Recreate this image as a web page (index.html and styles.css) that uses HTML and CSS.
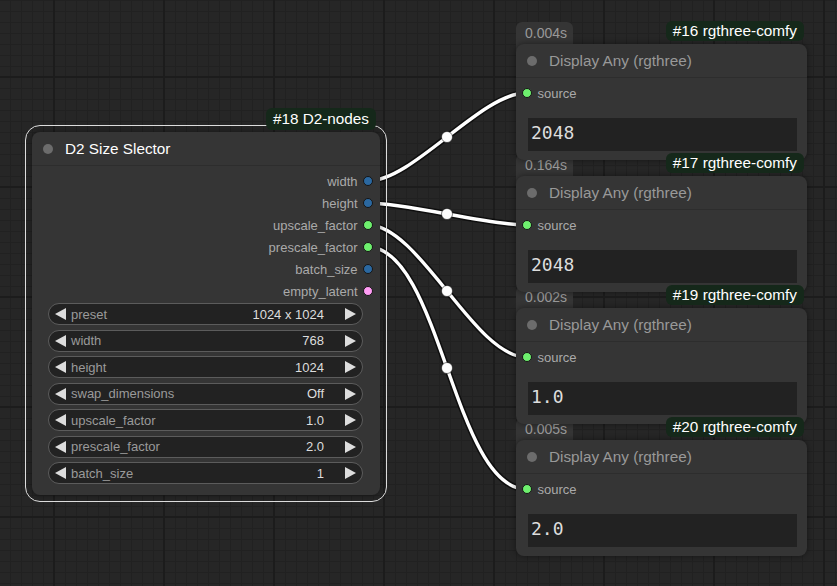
FILE: index.html
```html
<!DOCTYPE html>
<html lang="en">
<head>
    <meta charset="UTF-8">
    <meta name="viewport" content="width=device-width, initial-scale=1.0">
    <title>D2 Size Selector - graph</title>
    <link rel="stylesheet" href="styles.css">
</head>
<body>
    <div class="canvas">
        <svg class="links" width="837" height="586" viewBox="0 0 837 586">
            <g class="link-shadow">
                <path d="M368 181 C413 181, 481 93, 526 93"/>
                <path d="M368 203 C408 203, 486 225, 526 225"/>
                <path d="M368 225 C419.5 225, 474.5 357, 526 357"/>
                <path d="M368 247 C440 247, 454 489, 526 489"/>
            </g>
            <g class="link">
                <path d="M368 181 C413 181, 481 93, 526 93"/>
                <path d="M368 203 C408 203, 486 225, 526 225"/>
                <path d="M368 225 C419.5 225, 474.5 357, 526 357"/>
                <path d="M368 247 C440 247, 454 489, 526 489"/>
            </g>
            <g class="link-mid">
                <circle cx="447" cy="137" r="5.5"/>
                <circle cx="447" cy="214" r="5.5"/>
                <circle cx="447" cy="291" r="5.5"/>
                <circle cx="447" cy="368" r="5.5"/>
            </g>
        </svg>

        <!-- size selector node -->
        <div class="node sizer selected">
            <div class="id-badge">#18 D2-nodes</div>
            <div class="node-title"><span class="title-dot"></span>D2 Size Slector</div>
            <div class="outputs">
                <div class="out">width <span class="slot int"></span></div>
                <div class="out">height <span class="slot int"></span></div>
                <div class="out">upscale_factor <span class="slot float"></span></div>
                <div class="out">prescale_factor <span class="slot float"></span></div>
                <div class="out">batch_size <span class="slot int"></span></div>
                <div class="out">empty_latent <span class="slot latent"></span></div>
            </div>
            <div class="widgets">
                <div class="widget"><span class="arrow left"></span><span class="w-label">preset</span><span class="w-value">1024 x 1024</span><span class="arrow right"></span></div>
                <div class="widget"><span class="arrow left"></span><span class="w-label">width</span><span class="w-value">768</span><span class="arrow right"></span></div>
                <div class="widget"><span class="arrow left"></span><span class="w-label">height</span><span class="w-value">1024</span><span class="arrow right"></span></div>
                <div class="widget"><span class="arrow left"></span><span class="w-label">swap_dimensions</span><span class="w-value">Off</span><span class="arrow right"></span></div>
                <div class="widget"><span class="arrow left"></span><span class="w-label">upscale_factor</span><span class="w-value">1.0</span><span class="arrow right"></span></div>
                <div class="widget"><span class="arrow left"></span><span class="w-label">prescale_factor</span><span class="w-value">2.0</span><span class="arrow right"></span></div>
                <div class="widget"><span class="arrow left"></span><span class="w-label">batch_size</span><span class="w-value">1</span><span class="arrow right"></span></div>
            </div>
        </div>

        <!-- display nodes -->
        <div class="node display n16">
            <div class="timing">0.004s</div>
            <div class="id-badge">#16 rgthree-comfy</div>
            <div class="node-title"><span class="title-dot"></span>Display Any (rgthree)</div>
            <div class="in"><span class="slot float"></span>source</div>
            <div class="display-text">2048</div>
        </div>

        <div class="node display n17">
            <div class="timing">0.164s</div>
            <div class="id-badge">#17 rgthree-comfy</div>
            <div class="node-title"><span class="title-dot"></span>Display Any (rgthree)</div>
            <div class="in"><span class="slot float"></span>source</div>
            <div class="display-text">2048</div>
        </div>

        <div class="node display n19">
            <div class="timing">0.002s</div>
            <div class="id-badge">#19 rgthree-comfy</div>
            <div class="node-title"><span class="title-dot"></span>Display Any (rgthree)</div>
            <div class="in"><span class="slot float"></span>source</div>
            <div class="display-text">1.0</div>
        </div>

        <div class="node display n20">
            <div class="timing">0.005s</div>
            <div class="id-badge">#20 rgthree-comfy</div>
            <div class="node-title"><span class="title-dot"></span>Display Any (rgthree)</div>
            <div class="in"><span class="slot float"></span>source</div>
            <div class="display-text">2.0</div>
        </div>
    </div>
</body>
</html>
```

FILE: styles.css
```css
body {
    margin: 0;
    background-color: #262626;
    font-family: "Liberation Sans", Arial, sans-serif;
}
.canvas {
    position: relative;
    width: 837px;
    height: 586px;
    overflow: hidden;
    isolation: isolate;
    background-color: #262626;
    background-image:
        linear-gradient(to right, #1c1c1c 2px, transparent 2px),
        linear-gradient(to bottom, #1c1c1c 2px, transparent 2px),
        linear-gradient(to right, #212121 1px, transparent 1px),
        linear-gradient(to bottom, #212121 1px, transparent 1px);
    background-size: 110px 110px, 110px 110px, 11px 11px, 11px 11px;
    background-position: 53px 0, 0 76px, 10px 0, 0 0;
}
.links {
    position: absolute;
    left: 0;
    top: 0;
}
.link-shadow path {
    fill: none;
    stroke: rgba(0, 0, 0, 0.6);
    stroke-width: 6.5;
}
.link path {
    fill: none;
    stroke: #ffffff;
    stroke-width: 3.4;
}
.link-mid circle {
    fill: #ffffff;
    stroke: rgba(0, 0, 0, 0.5);
    stroke-width: 1;
}

/* nodes */
.node {
    position: absolute;
    background: #353535;
    border-radius: 8px;
    box-shadow: 0 0 6px rgba(0, 0, 0, 0.45);
}
.node.selected {
    outline: 1px solid #dddddd;
    outline-offset: 6px;
}
.node-title {
    height: 33px;
    display: flex;
    align-items: center;
    gap: 12px;
    padding-left: 11px;
    border-bottom: 1px solid #2d2d2d;
    font-size: 15.3px;
    color: #999999;
}
.selected .node-title {
    color: #ffffff;
}
.title-dot {
    width: 10px;
    height: 10px;
    border-radius: 50%;
    background: #6c6c6c;
}
.id-badge {
    position: absolute;
    right: 3px;
    top: -23px;
    height: 20px;
    line-height: 20px;
    padding: 0 7px;
    background: #15281a;
    border-radius: 6px;
    color: #ffffff;
    font-size: 15.3px;
    z-index: 1;
}
.slot {
    width: 8px;
    height: 8px;
    border-radius: 50%;
    border: 1px solid #151515;
    flex: none;
}
.slot.int {
    background: #2b68a0;
}
.slot.float {
    background: #6ef06e;
}
.slot.latent {
    background: #ff9cf4;
}

/* size selector */
.sizer {
    left: 32px;
    top: 132px;
    width: 348px;
    height: 363px;
}
.sizer .id-badge {
    right: 4px;
    top: -24px;
    height: 22px;
    line-height: 22px;
}
.outputs {
    padding: 4px 7px 0 0;
    display: flex;
    flex-direction: column;
    align-items: flex-end;
}
.out {
    height: 22px;
    display: flex;
    align-items: center;
    gap: 5.5px;
    font-size: 13px;
    color: #aaaaaa;
}
.widgets {
    margin-top: 1px;
    padding: 0 17px 0 16px;
    display: flex;
    flex-direction: column;
    gap: 4.5px;
}
.widget {
    height: 22px;
    box-sizing: border-box;
    display: flex;
    align-items: center;
    padding: 0 6px;
    border: 1px solid #5c5c5c;
    border-radius: 11px;
    background: #222222;
    font-size: 13px;
}
.w-label {
    flex: 1;
    margin-left: 5px;
    color: #9a9a9a;
}
.w-value {
    margin-right: 21px;
    color: #dddddd;
}
.arrow {
    width: 0;
    height: 0;
    border-top: 6px solid transparent;
    border-bottom: 6px solid transparent;
}
.arrow.left {
    border-right: 11px solid #dddddd;
}
.arrow.right {
    border-left: 11px solid #dddddd;
}

/* display any nodes */
.display {
    left: 516px;
    width: 291px;
    height: 116px;
}
.n16 { top: 44px; }
.n17 { top: 176px; }
.n19 { top: 308px; }
.n20 { top: 440px; }
.timing {
    position: absolute;
    left: 0;
    top: -22px;
    width: 48px;
    height: 30px;
    padding-left: 9px;
    line-height: 22px;
    background: #353535;
    border-radius: 6px 6px 0 0;
    font-size: 14px;
    color: #999999;
    z-index: -1;
}
.in {
    height: 22px;
    margin-top: 4px;
    padding-left: 6px;
    display: flex;
    align-items: center;
    gap: 5.5px;
    font-size: 13px;
    color: #aaaaaa;
}
.display-text {
    margin: 14px 10px 0 12px;
    height: 33px;
    padding-left: 3px;
    line-height: 30px;
    background: #222222;
    font-family: "DejaVu Sans Mono", monospace;
    font-size: 18px;
    color: #dddddd;
}
```
